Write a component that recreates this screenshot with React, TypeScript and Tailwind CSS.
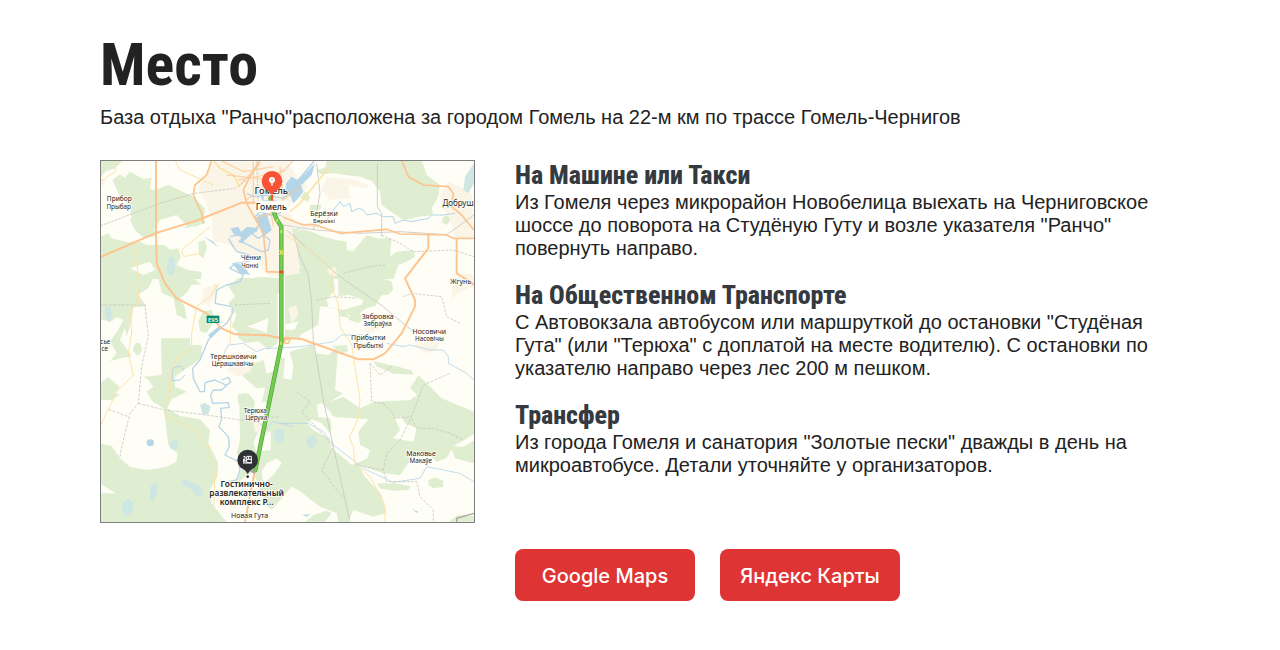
import type { ReactNode } from "react";

const forest = "#dfeed1";
const town = "#fbf5e8";
const water = "#b5d5e8";

type LabelProps = { x: number; y: number; size?: number; weight?: number; children: ReactNode };

function Label({ x, y, size = 20, weight = 400, children }: LabelProps) {
  return (
    <text x={x} y={y} fontSize={size} fontWeight={weight} textAnchor="middle" fill="#262626" stroke="#fffef8" strokeWidth={5} paintOrder="stroke" strokeLinejoin="round">
      {children}
    </text>
  );
}

function RouteMap() {
  return (
    <svg viewBox="3 3 1119 1083" className="block w-full border border-[#7d7d7d] font-['Noto_Sans',sans-serif]" role="img" aria-label="Маршрут от Гомеля до базы отдыха">
      <rect width="1125" height="1089" fill="#fffef6" />

      {/* Forests */}
      <g fill={forest}>
        <g transform="translate(-15 -15)">
          <path d="M15 15H85L60 40L30 50L15 70Z" />
          <path d="M52 75L75 58L90 68L105 50L145 72L170 68L165 100L185 110L240 108L290 122L330 160L325 205L300 215L250 200L210 235L185 230L180 205L160 190L130 195L105 180L110 155L75 125Z" />
          <path d="M128 160L180 190L215 200L240 160L325 170L330 205L250 225L230 235L195 230L175 245L145 248L120 225L105 195Z" />
          <path d="M15 245L40 235L50 250L100 262L130 258L155 270L210 270L225 285L250 280L258 305L245 330L280 345L320 350L318 372H15Z" />
          <path d="M105 105L180 105L220 90L285 120L318 155L310 190L225 200L140 170Z" />
          <path d="M310 260L330 255L336 278L325 310L312 300Z" />
          <path d="M370 90L400 65L415 75L395 110L382 108Z" />
        </g>
        <path d="M400 385L425 360L480 350L540 355V400L470 395L430 420Z" />
        <g transform="translate(555 -15)">
          <path d="M125 15H410L425 60L465 90L460 125L440 160L445 180L400 185L355 195L325 175L290 150L285 110L260 78L225 65L180 60L150 55L105 58L95 45L120 38Z" />
          <path d="M10 220H45L80 230L115 245L155 255L185 260V285L205 288L245 240L275 250L320 250L315 305L335 290L385 285L390 305L365 320L340 330L325 372H0V345L45 340L40 310L10 290Z" />
          <path d="M475 185L490 180L497 195L485 210L470 202Z" />
          <path d="M45 130L60 108L75 125L70 140Z M75 150L110 150L105 165L75 168Z" />
        </g>
        <g transform="translate(-15 354)">
          <path d="M15 0H175L160 30L130 50L155 85L115 88L110 130L95 175L90 150L75 185L90 205L110 235L80 240L45 250L65 225L45 190L70 155L85 125L45 110L15 120Z" />
          <path d="M15 0H110L112 90L80 105L50 130L15 125Z" />
          <path d="M190 0H295L320 20L290 20L275 45L255 60L270 90L275 125L245 110L235 60L200 45Z" />
          <path d="M325 100L350 95L360 125L335 165L315 160L310 130Z" />
          <path d="M430 0H548V195L520 215L490 190L450 195L430 180L425 155L455 145L490 155L515 165L520 120L460 145L425 160L410 145L425 110L400 75L420 55L400 25Z" />
          <path d="M125 195L140 210L135 230L118 215Z" />
          <path d="M15 310L65 325L55 345L75 350L50 366H15Z" />
          <path d="M428 350L450 345L475 365L470 380H430Z M520 290L555 270L560 310L525 375L500 372Z" />
        </g>
        <g transform="translate(555 354)">
          <path d="M0 0H145L150 35L125 65L130 88L175 95L195 120L165 115L155 90L105 85L100 140L75 155L45 170L45 180L0 190V155L30 155L40 130L0 140Z" />
          <path d="M160 0H285L320 10L325 35L310 50L290 52L270 85L245 90L225 105L235 125L220 135L190 125L195 110L165 110L175 95L230 80L235 65L190 50L160 55Z" />
          <path d="M140 205L185 200L190 220L170 225Z" />
        </g>
        {/* Western and central woods */}
        <g transform="translate(0 510)">
          <path d="M183 25H270V45H305V85L260 115L225 140V170L260 185L215 208L202 235L240 258L300 268L330 300L325 340L355 400L352 440L330 480L335 520L380 576H0V490H45L63 475L52 430L60 385L90 410L140 420L195 412L230 395L232 370L205 345L195 265L190 235L155 212L140 185L160 170L145 150L130 140L185 135Z" />
          <path d="M0 340L35 348L58 380L66 430L70 485L50 492L0 460Z" />
          <path d="M105 40L120 38L127 60L112 78L98 60Z" />
          <path d="M0 160L25 140L45 160L60 170L40 195L0 205Z" />
          <path d="M425 115L490 90L500 130L535 120L520 170L470 175L430 140Z" />
          <path d="M418 195L445 190L465 215L460 240L480 280L470 330L500 345V420L450 430L410 460L430 400L410 370L420 330Z" />
        </g>
        {/* Southern woods */}
        <path transform="translate(540 510)" d="M-5 80L15 85L10 145L35 150L40 105L28 65L100 45L105 70L145 75L175 50L165 180L190 190L150 215L190 200L240 235L285 215L390 210L412 195L390 175L415 135L485 205L582 245V400L525 385L515 358L500 385L470 395L450 375L390 385L385 400L360 435L310 430L235 405L255 440L305 495L318 550L280 560L220 540L205 576L175 576L170 550L120 530L55 480L35 470L0 510L-25 540L-45 520L-75 440L-65 390L-20 170Z" />
        <g transform="translate(555 720)">
          <path d="M430 240L450 232L475 242L475 260L445 265L430 255Z M275 250L325 250L378 258L370 270L325 272L285 265Z" />
          <path d="M60 365L85 345L125 332L140 340L120 365Z M490 365L520 345L570 348V365Z" />
          <path d="M265 -116L335 -101L380 -89L385 -76L325 -79L275 -101Z" />
        </g>
      </g>

      {/* Clearings */}
      <g fill="#fffef6">
        <path transform="translate(540 510)" d="M110 225L125 220L155 250V265L115 262Z M80 280L95 268L125 280L150 310L155 290L148 255L170 262L265 268L235 305L240 345L270 360L262 385L230 400L215 405L180 375L155 355L145 325L100 300Z M345 265L365 262L375 280L410 295L400 335L340 325L360 300Z M585 310L545 335L520 348L550 350L585 330Z" />
        <path d="M475 815H512V870L470 875L460 850Z M500 910L530 895L545 910L520 945L490 970L485 935Z" />
        <path d="M180 180L230 165L260 195L245 220L200 225L160 210Z M90 325L150 305L165 330L130 345Z" />
      </g>

      {/* Built-up areas */}
      <g fill={town}>
        <path d="M290 85L320 50L335 5H560L600 60L625 80L590 110L560 150L590 190L660 190L650 205L570 195L590 240L597 340L540 350L500 345L470 300L420 280L380 250L340 245L335 175L310 110Z" />
        <path d="M665 90L680 50L765 60L805 75L800 85L745 75L750 115L690 120Z M1020 110L1045 65L1080 80L1115 105L1122 235H1065L1050 170L1025 145Z M1060 360L1090 340L1122 345V380L1080 395L1055 420Z M585 220L650 190L665 195L655 205L610 200Z" />
        <path d="M310 385L360 370L355 390L330 440L305 425Z M380 630L410 600L460 610L450 635L410 650Z M780 510L830 490L840 505L810 520Z M945 555L1020 540L1010 570L980 580L950 565Z M565 445L590 435L595 465L575 490Z M460 790L485 780L490 820L465 815Z" />
        <path d="M0 55L20 60L10 75L0 80Z M560 310L595 320L600 340L565 345Z M680 330L705 320L715 345L695 350Z" />
      </g>

      {/* Lakes */}
      <g fill="#cfe7e2">
        <ellipse cx="213" cy="318" rx="12" ry="29" />
        <path d="M15 445L30 438L38 465L28 488L16 475Z M300 735L315 728L332 740L325 762L308 765Z M212 845L230 838L235 860L225 872L210 865Z M525 810L550 804L553 840L535 850L522 835Z M622 830L645 824L650 850L635 868L620 855Z M150 980L170 965L172 1000L160 1025L150 1015Z M248 955L305 980L308 1008L290 1010L270 985L245 975Z M68 1028L85 1015L102 1030L95 1060L78 1070L65 1050Z" />
        <path d="M1095 50L1122 10V70L1105 100L1090 90Z" />
      </g>

      {/* Rivers */}
      <g fill="none" stroke={water} strokeWidth="4" strokeLinejoin="round">
        <path d="M645 0L620 30L590 65L580 90L550 115L500 105L460 110L440 100M550 115L540 160L510 165L480 155L465 170L480 190L465 210L440 205L415 225L390 230M440 210L475 235L490 225L510 240L505 270L485 275L465 265L425 245M385 235L400 260L410 275L450 285L445 305L405 310L390 325L430 345L420 365L380 375L350 390L345 430L395 440L400 455L380 490L355 510L325 540L300 600L278 625L280 655L300 695L313 695L315 668L345 660L380 676L392 665L385 652L365 660M380 676L365 690L340 690L332 705L338 730L385 728L388 742L362 745L365 775L357 800L385 830L388 860L375 885L415 905L420 930L410 960L385 965" />
        <path d="M217 640L220 625L240 617L252 630M217 662L240 660L256 645M217 640V662" strokeWidth="3" />
        <path d="M370 585L385 555L430 550L470 575L495 565L520 565L600 560L670 550L700 545L725 525L790 525M860 550L910 560L930 555L990 570L1030 570L1045 590L1045 610L1100 640L1122 660" strokeWidth="2.5" />
        <path d="M680 180L700 150L720 125L730 140L750 130L755 155L775 145L790 150L800 165L830 160L850 170L880 170L885 190L910 180L935 185L985 175L995 165L1030 165L1065 160" strokeWidth="3" />
        <path d="M540 790H625L670 815L700 855L740 885L790 925L880 967L960 955L980 920L1080 940L1122 965M470 785L500 805L520 785L580 800" strokeWidth="2.5" />
      </g>
      <g fill={water}>
        <path d="M558 70L575 50L600 65L610 95L595 115L580 130L570 105L558 105Z M595 60L630 25L645 10L635 45L605 75Z M392 205L415 200L425 220L440 200L475 205L470 215L430 235L400 222Z M414 245L440 215L452 225L425 250Z M475 165L500 160L515 210L490 230L470 180Z M395 308L430 315L450 345L420 340Z M480 100L495 98L490 120L530 120L530 128L490 132Z M325 525L355 500L365 505L330 535Z M310 228L340 245L355 262L325 240Z" />
        <ellipse cx="151" cy="848" rx="11" ry="10" />
        <path d="M606 1064L632 1063L620 1070Z M937 1047L955 1055L950 1059Z" />
      </g>

      {/* Railways and boundaries */}
      <g fill="none" stroke="#c6c6c0" strokeWidth="2.5">
        <path d="M0 198L180 130L285 100L405 85L440 60L480 10M470 0L475 140L550 170" strokeDasharray="9 3" />
        <path d="M550 195L650 210L775 220L900 215L1040 224L1060 210L1122 165M580 220L600 290L625 345L635 430L640 540L670 720L700 860L750 1085" />
        <path d="M560 210L720 350L770 385L850 440L940 515M832 10V140L845 160V230M650 10L660 100L640 210" />
        <path d="M0 435H135L145 530L125 620L115 730L90 760L65 860L60 890M25 748L85 770M115 730L195 750L320 765L420 780L540 770" strokeDasharray="9 4" />
        <path d="M405 435L510 430M650 420L700 410L770 415M910 410L935 400L1025 410L1040 470L1080 490M845 225L900 250L940 275L1060 270L1122 290M730 340L810 320L855 315" strokeDasharray="8 4" />
        <path d="M590 695L630 725L605 755L665 820L700 860L665 930L730 1015M850 730L870 750L885 775L935 770L970 675L1050 640M935 775L950 805L1000 805L1050 820L1090 840M850 930L860 880L900 840L935 770M765 915L850 930L860 965L950 965L960 1010L1000 1050V1086" strokeDasharray="9 4" />
        <path d="M810 610L815 725L850 730M810 610L840 645L875 620" strokeDasharray="8 4" />
        <path d="M1070 1085V1075L1122 1060" stroke="#a9a49f" strokeWidth="4" />
      </g>

      {/* Secondary roads */}
      <g fill="none" stroke="#fde3a7" strokeWidth="3">
        <path d="M50 0L45 35L0 65M225 0L240 30L285 50L340 75M100 255L118 360L115 430L90 450L95 520L85 580L100 645L50 695L0 800M197 740L195 765L225 780L290 815L325 855L330 890L345 930L340 1086" />
        <path d="M300 280L250 290L245 270L330 200M335 405L350 380L340 370M355 370L330 410L290 440L275 520V570L235 590L213 625L212 690L197 740M395 430L390 550" />
        <path d="M555 225L630 270L700 335L690 370L715 430L720 500L755 555L780 720L775 775L748 832L760 860L765 910L810 950L855 1035V1086" />
        <path d="M570 155L600 130L685 25M340 0L360 25L400 45L420 80" strokeWidth="5" />
      </g>

      {/* Main roads */}
      <g fill="none" stroke="#fdc48e" strokeWidth="6" strokeLinejoin="round">
        <path d="M168 0V220L170 310L195 370L230 415L320 460L365 505L405 523L500 526L550 536M545 545L565 534L605 537L730 582L775 598H820L855 580L905 520L945 440V420L915 355L985 265V225" />
        <path d="M0 292L165 220L295 180L425 128L470 128" />
        <path d="M550 172L610 195L640 193L720 220L860 208L900 222L1040 225L1060 235H1122" strokeWidth="5" />
        <path d="M1070 235V340L1110 365L1122 375" />
        <path d="M310 190L305 160L280 105L285 75L320 45L335 0M480 0L450 50L430 90L440 130L490 220L498 300L500 335L545 337M905 0L925 50L970 75L1045 80L1060 100L1055 140L1085 165L1122 210" strokeWidth="5" />
        <path d="M440 120L550 30M380 45L550 65M415 80L480 10M465 175L550 150M360 0L430 35L520 20M415 60L550 35L580 0M460 0V130M500 80L520 200M540 20L550 120L600 80" strokeWidth="4" opacity=".7" />
        <path d="M465 930L435 1086" strokeWidth="6" />
        <circle cx="560" cy="541" r="9" strokeWidth="5" />
      </g>

      {/* Driving route */}
      <g fill="none" strokeLinejoin="round" strokeLinecap="round">
        <path d="M512 115L515 140L530 178L544 200V550L466 930" stroke="#529d3b" strokeWidth="13" />
        <path d="M512 115L515 140L530 178L544 200V550L466 930" stroke="#73cc4f" strokeWidth="9" />
        <path d="M544 212V218M540 272L548 282M548 272L540 282M543 548V553M532 180L530 184" stroke="#d5e64c" strokeWidth="5" />
        <path d="M544 332V340" stroke="#e64c3c" strokeWidth="12" strokeLinecap="butt" />
        <path d="M444 927L462 936" stroke="#a7a79f" strokeWidth="9" />
        <path d="M516 107V125" stroke="#f65437" strokeWidth="7" strokeDasharray="5 4" />
      </g>

      {/* Place names */}
      <Label x={58} y={124}>Прибор</Label>
      <Label x={56} y={146} size={19}>Прыбар</Label>
      <Label x={514} y={101} size={28} weight={500}>Гомель</Label>
      <rect x="467" y="122" width="96" height="35" rx="9" fill="#fffef8" />
      <Label x={514} y={149} size={26} weight={500}>Гомель</Label>
      <Label x={672} y={167} size={21}>Берёзки</Label>
      <Label x={672} y={189} size={18}>Бярозкі</Label>
      <Label x={1074} y={139} size={24}>Добруш</Label>
      <Label x={453} y={301}>Чёнки</Label>
      <Label x={450} y={323} size={19}>Чонкі</Label>
      <Label x={1082} y={371} size={21}>Жгунь</Label>
      <Label x={833} y={476} size={21}>Зябровка</Label>
      <Label x={833} y={498} size={19}>Зябраўка</Label>
      <Label x={988} y={521} size={21}>Носовичи</Label>
      <Label x={988} y={543} size={19}>Насовічы</Label>
      <Label x={805} y={541} size={21}>Прибытки</Label>
      <Label x={805} y={563} size={19}>Прыбыткі</Label>
      <Label x={400} y={597} size={21}>Терешковичи</Label>
      <Label x={398} y={618} size={19}>Церашкавічы</Label>
      <Label x={16} y={552} size={19}>сье</Label>
      <Label x={14} y={573} size={19}>се</Label>
      <Label x={466} y={759} size={20}>Терюха</Label>
      <Label x={469} y={781} size={19}>Церуха</Label>
      <Label x={963} y={888} size={21}>Маковье</Label>
      <Label x={962} y={910} size={19}>Макаўе</Label>
      <Label x={440} y={982} size={25} weight={600}>Гостинично-</Label>
      <Label x={440} y={1009} size={25} weight={600}>развлекательный</Label>
      <Label x={440} y={1036} size={25} weight={600}>комплекс Р...</Label>
      <Label x={449} y={1075} size={21}>Новая Гута</Label>
      <rect x="320" y="467" width="38" height="22" fill="#008c69" />
      <text x="339" y="485" fontSize="18" fontWeight="600" textAnchor="middle" fill="#fff">E95</text>

      {/* Start and finish pins */}
      <circle cx="516" cy="64" r="31" fill="#f85336" />
      <path d="M505 90H527L516 105Z" fill="#f85336" />
      <circle cx="516" cy="60" r="9" fill="#fff" />
      <path d="M514 66H518V77H514Z" fill="#fff" />
      <circle cx="516" cy="59" r="2" fill="#f85336" />
      <circle cx="443" cy="900" r="31" fill="#303134" />
      <path d="M432 926H454L443 942Z" fill="#303134" />
      <g fill="none" stroke="#fff" strokeWidth="3">
        <path d="M440 889H454V908H440ZM440 898H454M446 889V898M430 891L435 889V898H429M429 902H439M429 909H456M431 898V908M435 904V908" />
      </g>
      <circle cx="443" cy="950" r="7" fill="#fffef8" />
      <circle cx="443" cy="950" r="4" fill="#303134" />
    </svg>
  );
}

type DirectionProps = { title: string; children: ReactNode };

function Direction({ title, children }: DirectionProps) {
  return (
    <section>
      <h2 className="font-['Roboto_Condensed',Roboto,sans-serif] text-[26px] leading-[31px] font-extrabold text-[#343a40]">{title}</h2>
      <p>{children}</p>
    </section>
  );
}

function MapLink({ href, children }: { href: string; children: ReactNode }) {
  return (
    <a href={href} className="flex h-[52px] w-[180px] items-center justify-center rounded-lg bg-[#df3434] pt-0.5 font-[Inter,sans-serif] text-xl font-medium text-white hover:bg-[#c92c2c]">
      {children}
    </a>
  );
}

export default function App() {
  return (
    <main className="mx-auto max-w-[1120px] bg-white px-5 pt-7 pb-12 font-['Liberation_Sans',Arial,sans-serif] text-xl leading-[23px] text-[#222]">
      <h1 className="mb-1 font-['Roboto_Condensed',Roboto,sans-serif] text-6xl leading-[74px] font-bold">Место</h1>
      <p>База отдыха "Ранчо"расположена за городом Гомель на 22-м км по трассе Гомель-Чернигов</p>
      <div className="mt-[31px] flex flex-col gap-10 md:flex-row md:items-start">
        <div className="w-full max-w-[375px] shrink-0">
          <RouteMap />
        </div>
        <div className="min-w-0 flex-1">
          <div className="flex flex-col gap-5">
            <Direction title="На Машине или Такси">
              Из Гомеля через микрорайон Новобелица выехать на Черниговское шоссе до поворота на Студёную Гуту и возле указателя "Ранчо" повернуть направо.
            </Direction>
            <Direction title="На Общественном Транспорте">
              С Автовокзала автобусом или маршруткой до остановки "Студёная Гута" (или "Терюха" с доплатой на месте водителю). С остановки по указателю направо через лес 200 м пешком.
            </Direction>
            <Direction title="Трансфер">
              Из города Гомеля и санатория "Золотые пески" дважды в день на микроавтобусе. Детали уточняйте у организаторов.
            </Direction>
          </div>
          <nav aria-label="Карты" className="mt-[72px] flex flex-wrap gap-[25px]">
            <MapLink href="#google-maps">Google Maps</MapLink>
            <MapLink href="#yandex-maps">Яндекс Карты</MapLink>
          </nav>
        </div>
      </div>
    </main>
  );
}
